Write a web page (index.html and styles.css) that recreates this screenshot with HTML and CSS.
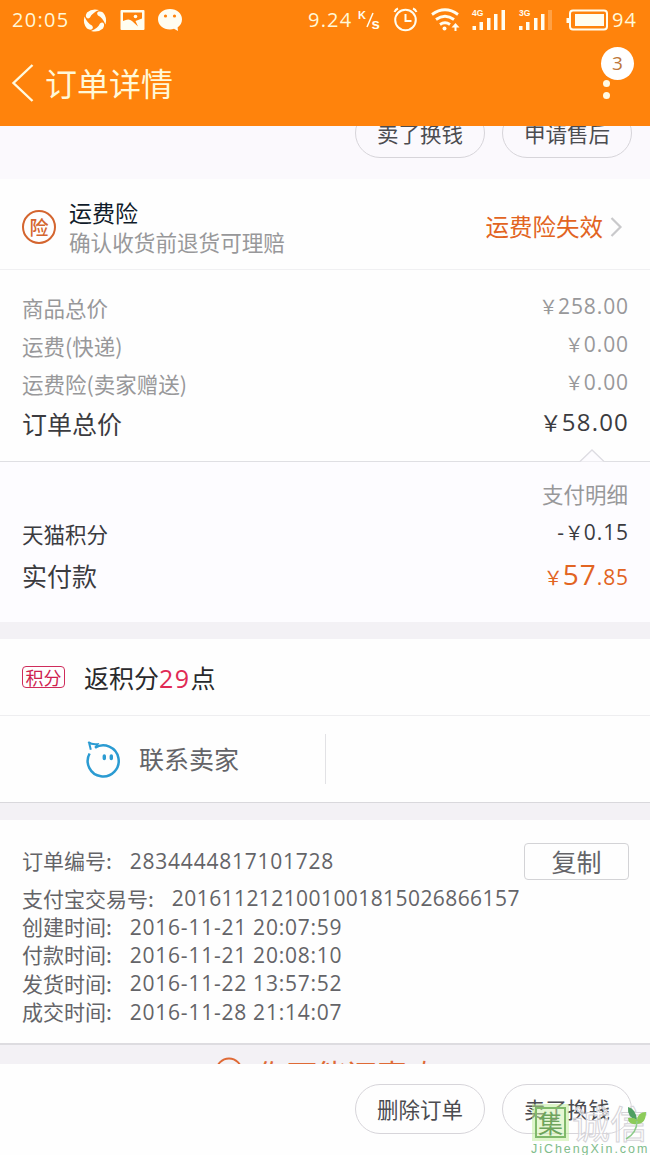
FILE: index.html
```html
<!DOCTYPE html>
<html lang="zh-CN">
<head>
<meta charset="utf-8">
<title>订单详情</title>
<link rel="stylesheet" href="styles.css">
</head>
<body>
<div class="app">
  <header class="top">
    <div class="status">
      <span class="clock">20:05</span>
      <svg class="st-icons" width="104" height="40" viewBox="80 0 104 40">
        <g fill="#fffdf0">
          <path id="petal" d="M87 12.500Q92 8 99 10Q92 13 90 17.500Q87.500 19.500 86 17Q85.500 14.500 87 12.500Z"/>
          <use href="#petal" transform="rotate(90 95 20.500)"/>
          <use href="#petal" transform="rotate(180 95 20.500)"/>
          <use href="#petal" transform="rotate(270 95 20.500)"/>
        </g>
        <path fill="#fffdf0" fill-rule="evenodd" d="M121.500 10h22q1 0 1 1v18q0 1-1 1h-22q-1 0-1-1V11q0-1 1-1ZM123 12.500V21q6-3 9 0l6 5.500-2.500-5.500 6.500-2.500V12.500Z"/>
        <circle cx="135.500" cy="16.500" r="1.800" fill="#fffdf0"/>
        <path fill="#fffdf0" d="M170 9c7 0 12 4.500 12 10.200 0 3.500-1.600 6.300-4.400 8.200l.4 3.600-4-2.200c-1.200.4-2.600.6-4 .6-7 0-12-4.500-12-10.200S163 9 170 9Z"/>
        <circle cx="165.500" cy="16" r="1.600" fill="#ff830c"/><circle cx="174.500" cy="16" r="1.600" fill="#ff830c"/>
      </svg>
      <span class="speed">9.24</span>
      <svg class="st-right" width="254" height="40" viewBox="356 0 254 40">
        <g class="unit"><text x="358" y="19" font-size="11">K</text><text x="371.500" y="29" font-size="15">s</text></g>
        <path d="M373 13l-6 14" stroke="#fffdf0" stroke-width="1.500"/>
        <g fill="none" stroke="#fffdf0" stroke-width="2">
          <circle cx="405.500" cy="20" r="10.300"/><path d="M405.500 14v7h6M394.500 12q1-2.500 3.500-3.500M416.500 12q-1-2.500-3.500-3.500"/>
          <path stroke-width="2.800" d="M432 14.500q13-9.500 26 0M436 19.500q9-6.500 18 0M440 24.500q5-3.500 10 0"/>
          <path d="M455.500 31v-5"/>
          <rect x="570" y="10.500" width="37" height="19" rx="3"/>
        </g>
        <g fill="#fffdf0">
          <circle cx="444.500" cy="28.500" r="2"/><path d="M455.500 23l-4 4.500h8Z"/>
          <path d="M472.500 26h3.500v4h-3.500ZM479.500 22h3.500v8h-3.500ZM487 18h3.500v12H487ZM494 14h3.500v16H494ZM501.500 10h3.500v20h-3.500ZM519 26h3.500v4H519ZM526 22h3.500v8H526ZM534 18h3.500v12H534ZM541 14h3.500v16H541Z"/>
          <path opacity=".25" d="M548 10h4v20h-4Z"/>
          <path d="M575 14h29v12h-29ZM566.500 18h2.500v5h-2.500Z"/>
        </g>
        <g class="unit" font-size="8.500"><text x="472" y="16">4G</text><text x="519" y="16">3G</text></g>
      </svg>
      <span class="battery">94</span>
    </div>
    <div class="bar">
      <svg width="24" height="40" viewBox="0 0 24 40"><path d="M21.500 2 2.500 20 21.500 38" fill="none" stroke="#fffae0" stroke-width="2.400"/></svg>
      <h1>订单详情</h1>
      <div class="more"><span class="badge">3</span><i></i><i></i></div>
    </div>
  </header>

  <section class="peek">
    <span class="pill">卖了换钱</span><span class="pill">申请售后</span>
  </section>

  <section class="insure">
    <span class="ring">险</span>
    <div class="insure-text"><div class="name">运费险</div><div class="note">确认收货前退货可理赔</div></div>
    <span class="expired">运费险失效</span>
    <svg width="14" height="22" viewBox="0 0 14 22"><path d="M2.500 2l9 9-9 9" fill="none" stroke="#c9c9cb" stroke-width="2.200"/></svg>
  </section>

  <section class="prices">
    <div class="row"><span>商品总价</span><span class="amt"><b>&#xFFE5;</b>258.00</span></div>
    <div class="row"><span>运费(快递)</span><span class="amt"><b>&#xFFE5;</b>0.00</span></div>
    <div class="row"><span>运费险(卖家赠送)</span><span class="amt"><b>&#xFFE5;</b>0.00</span></div>
    <div class="row total"><span>订单总价</span><span class="amt"><b>&#xFFE5;</b>58.00</span></div>
  </section>

  <section class="pay">
    <svg class="notch" width="26" height="13" viewBox="0 0 26 13"><path d="M1 12.500 13 1l12 11.500" fill="#fdfcff" stroke="#dddce2" stroke-width="1.300"/></svg>
    <div class="row detail"><span>支付明细</span></div>
    <div class="row"><span>天猫积分</span><span class="amt">-<b>&#xFFE5;</b>0.15</span></div>
    <div class="row paid"><span>实付款</span><span class="amt hot"><b>&#xFFE5;</b><em>57</em>.85</span></div>
  </section>

  <section class="points"><span class="tag">积分</span><span class="back">返积分<em>29</em>点</span></section>
  <section class="contact">
    <div class="seller">
      <svg width="36" height="38" viewBox="0 0 36 38"><path d="M9 7.800A15.500 15.500 0 1 1 3.600 13.500" fill="none" stroke="#2b9bd2" stroke-width="2.500"/><path d="M2.200 2Q6 5 11.500 4.200L9.500 7.800M4.800 9.800 3 2.500" fill="none" stroke="#2b9bd2" stroke-width="2"/><path d="M18.300 16v2.500M25.300 16v2.500" stroke="#2b9bd2" stroke-width="3.400" stroke-linecap="round"/></svg>
      <span>联系卖家</span>
    </div>
  </section>

  <section class="info">
    <div class="line first"><span>订单编号:</span><span class="n no">2834444817101728</span><span class="copy">复制</span></div>
    <div class="line trade"><span>支付宝交易号:</span><span class="n tx">2016112121001001815026866157</span></div>
    <div class="line"><span>创建时间:</span><span class="n">2016-11-21 20:07:59</span></div>
    <div class="line"><span>付款时间:</span><span class="n">2016-11-21 20:08:10</span></div>
    <div class="line"><span>发货时间:</span><span class="n">2016-11-22 13:57:52</span></div>
    <div class="line"><span>成交时间:</span><span class="n">2016-11-28 21:14:07</span></div>
  </section>

  <section class="guess">
    <svg width="28" height="28" viewBox="0 0 28 28"><circle cx="14" cy="14" r="12.500" fill="none" stroke="#df6a36" stroke-width="2"/></svg>
    <span>你可能还喜欢</span>
  </section>

  <footer class="actions">
    <span class="pill">删除订单</span><span class="pill">卖了换钱</span>
    <div class="mark">
      <span class="seal">集</span><span class="hollow">诚信</span>
      <svg class="leaf" width="28" height="36" viewBox="0 0 28 36"><path d="M9 1q8 2 9 13Q8 12 9 1Z" fill="#4f9f62"/><path d="M18 14Q19 6 27 6q0 12-9 12-9 1-9-6 6-1 9 2Z" fill="#8ccb5a"/><path d="M18 15q0 12-11 18" fill="none" stroke="#8ccb8a" stroke-width="1.500"/></svg>
      <span class="site">JiChengXin.com</span>
    </div>
  </footer>
</div>
</body>
</html>
```
FILE: styles.css
```css
* { box-sizing: border-box; }
body { margin: 0; background: #fefefe; font-family: "Noto Sans CJK SC", sans-serif; color: #4c4c50; }
.app { width: 650px; height: 1155px; overflow: hidden; display: flex; flex-direction: column; }
section, header, footer { flex: none; }
em, b { font-style: normal; font-weight: inherit; }
svg { display: block; flex: none; }

.top { height: 126px; background: #ff830c; color: #fff8d8; }
.status { height: 40px; display: flex; align-items: center; padding-left: 12px; font: 20px/40px "Open Sans", "Noto Sans CJK SC", sans-serif; white-space: nowrap; }
.clock { width: 68px; letter-spacing: 1.300px; }
.speed { width: 48px; margin-left: 124px; letter-spacing: 1.200px; }
.battery { margin-left: 2px; letter-spacing: 1px; }
.unit { fill: #fffdf0; font-family: "Liberation Sans", sans-serif; font-weight: bold; }
.bar { height: 86px; display: flex; align-items: center; padding: 0 16px 0 11px; }
.bar h1 { margin: -3px 0 0 10px; font-size: 32px; line-height: 48px; font-weight: 400; }
.more { margin-left: auto; width: 33px; height: 72px; padding-left: 2px; }
.badge { display: block; width: 33px; height: 33px; margin-left: -2px; border-radius: 50%; background: #fff; color: #bd7638; font: 19px/32px "Open Sans", sans-serif; text-align: center; }
.more i { display: block; width: 7px; height: 7px; border-radius: 50%; background: #fffae6; }
.more i + i { margin-top: 5px; }

.pill { width: 130px; height: 50px; flex: none; border: 1px solid #d7d5da; border-radius: 25px; text-align: center; font-size: 21.500px; line-height: 47px; }
.peek { height: 53px; overflow: hidden; display: flex; justify-content: flex-end; gap: 17px; padding-right: 18px; background: #fbf9fd; }
.peek .pill { margin-top: -18px; }

.insure { height: 91px; display: flex; align-items: center; padding: 5px 27px 0 22px; border-bottom: 1px solid #f0f0f2; }
.ring { width: 34px; height: 34px; border: 2px solid #d4652f; border-radius: 50%; color: #d4652f; font-size: 19px; font-weight: 500; line-height: 29px; text-align: center; }
.insure-text { margin-left: 13px; }
.name { font-size: 23px; line-height: 30px; color: #101b2a; }
.note { font-size: 21.600px; line-height: 30px; color: #98989a; }
.expired { margin: -1px 6px 0 auto; font-size: 23.500px; line-height: 30px; color: #e26422; }

.row { display: flex; justify-content: space-between; align-items: center; height: 38px; font-size: 21.500px; }
.amt { font-family: "Open Sans", "Noto Sans CJK SC", sans-serif; font-size: 21px; line-height: 30px; letter-spacing: .9px; margin: -3px -1px 0 0; }
.amt b { font-family: "Noto Sans CJK SC", sans-serif; font-size: 19px; letter-spacing: 0; }
.prices { height: 192px; padding: 18px 22px 0; color: #98989a; border-bottom: 1px solid #dfdfe3; }
.row.total { height: 42px; font-size: 25px; color: #3b3b3f; }
.total .amt { font-size: 24px; letter-spacing: 1.200px; }
.total .amt b { font-size: 22px; }

.pay { position: relative; height: 160px; padding: 12px 22px 0; background: #fdfcff; color: #3b3b3f; }
.notch { position: absolute; right: 45px; top: -13px; }
.row.detail { justify-content: flex-end; color: #98989a; }
.row.detail + .row { height: 42px; }
.row.paid { height: 42px; font-size: 25px; }
.amt.hot { margin-top: 1px; color: #e26422; }
.hot em { font-size: 28px; letter-spacing: 1px; }

.points { height: 94px; padding: 0 22px; border-top: 17px solid #f3f1f5; border-bottom: 1px solid #eeeef0; display: flex; align-items: center; }
.tag { width: 43px; height: 22px; border: 1px solid #cf2c5b; border-radius: 4px; color: #cf1f50; font-size: 18px; line-height: 20px; text-align: center; }
.back { margin-left: 19px; font-size: 25px; line-height: 36px; color: #29292c; }
.back em { color: #e02a55; letter-spacing: 1.500px; font-family: "Open Sans", sans-serif; }
.contact { height: 87px; border-bottom: 1px solid #d9d8dc; display: flex; align-items: center; }
.seller { width: 326px; height: 50px; border-right: 1px solid #e2e2e5; display: flex; align-items: center; padding-left: 86px; font-size: 25px; color: #646468; }
.seller span { margin: -2px 0 0 17px; }

.info { height: 242px; border-top: 17px solid #f3f1f5; border-bottom: 2px solid #dddce0; padding: 17px 21px 0 22px; font-size: 21px; color: #646468; }
.line { display: flex; align-items: center; height: 28.300px; white-space: nowrap; }
.line.first { height: 46px; }
.line.trade { height: 29px; }
.n { margin: 1px 0 0 18px; font-family: "Open Sans", sans-serif; line-height: 28px; letter-spacing: .75px; }
.tx { letter-spacing: .42px; }
.copy { margin: 2px 0 0 auto; width: 105px; height: 37px; border: 1px solid #d3d3d6; border-radius: 4px; font-size: 25px; line-height: 34px; text-align: center; }

.guess { height: 19px; background: #f3f1f5; overflow: hidden; display: flex; align-items: flex-start; padding: 12px 0 0 215px; font-size: 30px; line-height: 32px; color: #df6a36; }
.guess span { margin-left: 14px; }

.actions { position: relative; height: 91px; display: flex; justify-content: flex-end; gap: 17px; padding: 20px 18px 0; background: #fefefe; }
.mark { position: absolute; left: 530px; top: 40px; width: 120px; height: 51px; }
.seal { position: absolute; left: 5px; top: 3px; width: 31px; height: 31px; border: 2px solid #7fb96a; outline: 3px solid rgba(190, 235, 150, .5); background: rgba(205, 240, 170, .5); color: #6da45c; font-size: 25px; line-height: 26px; text-align: center; }
.hollow { position: absolute; left: 42px; top: -2px; font-size: 38px; line-height: 40px; color: rgba(255, 255, 255, .6); -webkit-text-stroke: 1px #d5d3d8; }
.leaf { position: absolute; right: 3px; top: 2px; }
.site { position: absolute; left: 1px; top: 37px; font: 12.500px/16px "Liberation Sans", sans-serif; letter-spacing: 1.950px; color: #80bc8b; white-space: nowrap; }
```
